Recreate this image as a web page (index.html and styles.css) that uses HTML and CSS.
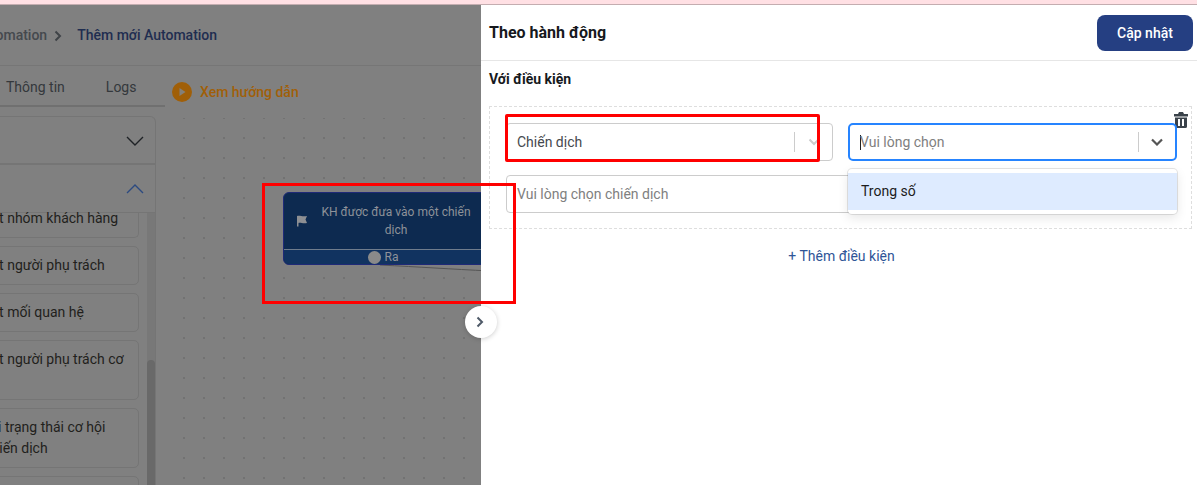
FILE: index.html
```html
<!DOCTYPE html>
<html lang="en">
<head>
    <meta charset="UTF-8">
    <meta name="viewport" content="width=device-width, initial-scale=1.0">
    <title>Thêm mới Automation</title>
    <link rel="icon" href="data:,">
    <link rel="stylesheet" href="styles.css">
</head>
<body>
    <div class="top-strip"></div>
    <div class="screen">
        <div class="left-pane">
            <div class="breadcrumb">
                <span class="crumb">Automation</span>
                <svg class="crumb-sep" width="8" height="12" viewBox="0 0 8 12"><path d="M1.500 1.500 6 6l-4.500 4.500" fill="none" stroke="#3f4347" stroke-width="2"/></svg>
                <span class="crumb-current">Thêm mới Automation</span>
            </div>
            <div class="work">
                <div class="sidebar">
                    <div class="tabs">
                        <span class="tab tab-info">Thông tin</span>
                        <span class="tab tab-logs">Logs</span>
                    </div>
                    <div class="accordion">
                        <div class="acc-head acc-first">
                            <svg width="18" height="10" viewBox="0 0 18 10"><path d="M1 1l8 8 8-8" fill="none" stroke="#1f2226" stroke-width="1.4"/></svg>
                        </div>
                        <div class="acc-head acc-second">
                            <svg width="18" height="10" viewBox="0 0 18 10"><path d="M1 9l8-8 8 8" fill="none" stroke="#2c4a80" stroke-width="1.4"/></svg>
                        </div>
                        <div class="acc-body">
                            <div class="items">
                                <div class="item item-cut">Cập nhật nhóm khách hàng</div>
                                <div class="item">Cập nhật người phụ trách</div>
                                <div class="item">Cập nhật mối quan hệ</div>
                                <div class="item">Cập nhật người phụ trách cơ hội</div>
                                <div class="item">Thay đổi trạng thái cơ hội trong chiến dịch</div>
                                <div class="item">Cập nhật</div>
                            </div>
                            <div class="scroll-track"><div class="scroll-thumb"></div></div>
                        </div>
                    </div>
                </div>
                <div class="canvas">
                    <div class="guide">
                        <svg width="20" height="20" viewBox="0 0 20 20"><circle cx="10" cy="10" r="10" fill="#a05f08"/><path d="M7.500 6v8l6-4z" fill="#84807a"/></svg>
                        <span>Xem hướng dẫn</span>
                    </div>
                    <svg class="edge" width="110" height="12" viewBox="0 0 110 12"><path d="M0 1C40 3 70 5 110 7" fill="none" stroke="#555" stroke-width="1"/></svg>
                    <div class="node">
                        <div class="node-main">
                            <svg class="node-flag" width="12" height="12" viewBox="0 0 12 12"><path d="M1 1c3-1 5 1 10 0L9.500 4.500 11 8C7 9 4 7 2.500 8L2.500 11.500H1z" fill="#8d8f93"/></svg>
                            <div class="node-title">KH được đưa vào một chiến dịch</div>
                        </div>
                        <div class="node-foot"><i class="port"></i>Ra</div>
                    </div>
                </div>
            </div>
        </div>
        <div class="panel">
            <div class="panel-head">
                <h2>Theo hành động</h2>
                <button class="btn-save">Cập nhật</button>
            </div>
            <div class="panel-body">
                <div class="cond-label">Với điều kiện</div>
                <div class="cond-box">
                    <svg class="trash" width="14" height="16" viewBox="0 0 14 16"><path d="M5 0h4l1 2h4v2.500H0V2h4zM1 5.500h12V14.500a1.500 1.500 0 0 1-1.500 1.500h-9A1.500 1.500 0 0 1 1 14.500zM4 7v7h2V7zM8 7v7h2V7z" fill-rule="evenodd" fill="#3a424a"/></svg>
                    <div class="cond-grid">
                        <div class="select">
                            <span class="select-value">Chiến dịch</span>
                            <span class="select-sep"></span>
                            <svg class="select-arrow" width="12" height="8" viewBox="0 0 12 8"><path d="M1.500 1.500 6 6l4.500-4.500" fill="none" stroke="#ccc" stroke-width="2"/></svg>
                        </div>
                        <div class="select-wrap">
                            <div class="select select-focus">
                                <i class="caret"></i>
                                <span class="placeholder">Vui lòng chọn</span>
                                <span class="select-sep"></span>
                                <svg class="select-arrow" width="12" height="8" viewBox="0 0 12 8"><path d="M1 1.500 6 6.500l5-5" fill="none" stroke="#555" stroke-width="2.200"/></svg>
                            </div>
                            <div class="menu"><div class="option">Trong số</div></div>
                        </div>
                        <div class="text-input"><span class="placeholder">Vui lòng chọn chiến dịch</span></div>
                    </div>
                </div>
                <a class="add-cond">+ Thêm điều kiện</a>
            </div>
        </div>
        <button class="drawer-toggle">
            <svg width="8" height="12" viewBox="0 0 8 12"><path d="M1.500 1.500 6 6l-4.500 4.500" fill="none" stroke="#4f5a68" stroke-width="2"/></svg>
        </button>
        <div class="mark mark-node"></div>
        <div class="mark mark-select"></div>
    </div>
</body>
</html>
```

FILE: styles.css
```css
* {
    box-sizing: border-box;
}
body {
    margin: 0;
    height: 485px;
    overflow: hidden;
    font-family: Roboto, "Noto Sans", sans-serif;
    font-size: 14px;
    line-height: 21px;
    color: #212529;
    background: #fff;
}
.top-strip {
    height: 5px;
    background: #ffe0e4;
    border-bottom: 1px solid #c4adb0;
}
.screen {
    position: relative;
    display: flex;
    height: 480px;
    overflow: hidden;
}

/* dimmed page behind the drawer */
.left-pane {
    width: 481px;
    flex: none;
    background: #808080;
    overflow: hidden;
    display: flex;
    flex-direction: column;
}
.breadcrumb {
    height: 61px;
    flex: none;
    display: flex;
    align-items: center;
    margin-left: -26px;
    padding-top: 1px;
    border-bottom: 1px solid #767676;
    font-weight: 500;
}
.crumb {
    color: #45494e;
}
.crumb-sep {
    margin: 0 15px 0 7px;
}
.crumb-current {
    color: #1f2d50;
}
.work {
    flex: 1;
    display: flex;
    min-height: 0;
}
.sidebar {
    width: 165px;
    flex: none;
    overflow: hidden;
}
.tabs {
    height: 41px;
    padding-top: 3px;
    display: flex;
    align-items: center;
    border-bottom: 2px solid #707070;
    color: #34383c;
}
.tab-info {
    margin-left: 6px;
}
.tab-logs {
    margin-left: 41px;
}
.accordion {
    margin-top: 9px;
    width: 156px;
    height: 400px;
    border: 1px solid #757575;
    border-left: none;
    border-radius: 0 6px 0 0;
}
.acc-head {
    height: 48px;
    display: flex;
    align-items: center;
    justify-content: flex-end;
    padding-right: 11px;
    border-bottom: 2px solid #757575;
}
.acc-first {
    padding-top: 2px;
}
.acc-second {
    border-bottom-width: 1px;
}
.acc-body {
    display: flex;
}
.items {
    width: 212px;
    margin-left: -65px;
    flex: none;
    padding-right: 8px;
    display: flex;
    flex-direction: column;
    gap: 8px;
}
.item {
    padding: 8px 12px;
    border: 1px solid #757575;
    border-radius: 5px;
    color: #221f1c;
}
.item-cut {
    height: 25px;
    padding-top: 0;
    border-top: none;
    border-radius: 0 0 5px 5px;
    line-height: 10px;
}
.scroll-track {
    width: 8px;
    height: 272px;
    background: #787878;
}
.scroll-thumb {
    width: 8px;
    height: 130px;
    margin-top: 147px;
    border-radius: 4px 4px 0 0;
    background: #696969;
}
.canvas {
    position: relative;
    flex: 1;
    background-color: #808080;
    background-image: radial-gradient(circle at 1px 1px, #727272 1px, transparent 1.2px);
    background-size: 20px 20px;
    background-position: -2px -9px;
}
.guide {
    display: flex;
    align-items: center;
    gap: 8px;
    height: 52px;
    margin-left: 7px;
    color: #a05f08;
    font-weight: 500;
    background: #808080;
}
.edge {
    position: absolute;
    left: 215px;
    top: 198px;
}
/* node sits on the free canvas */
.node {
    position: absolute;
    left: 118px;
    top: 126px;
    width: 210px;
    height: 73px;
    border: 1px solid #1f2a78;
    border-radius: 6px;
    overflow: hidden;
    background: #0d2a50;
    color: #8e9299;
    font-size: 12px;
    line-height: 18px;
}
.node-main {
    height: 57px;
    display: flex;
    align-items: center;
    border-bottom: 1px solid #6f7c8c;
}
.node-flag {
    margin-left: 12px;
    flex: none;
}
.node-title {
    width: 156px;
    margin-left: 10px;
    text-align: center;
}
.node-foot {
    height: 14px;
    display: flex;
    align-items: center;
    justify-content: center;
    gap: 4px;
    padding-right: 10px;
    background: #113360;
}
.port {
    width: 13px;
    height: 13px;
    border-radius: 50%;
    background: #8a8a8a;
}

/* drawer */
.panel {
    flex: 1;
    min-width: 0;
    background: #fff;
}
.panel-head {
    height: 56px;
    display: flex;
    align-items: center;
    justify-content: space-between;
    padding: 0 4px 0 8px;
    border-bottom: 1px solid #e6e6e6;
}
.panel-head h2 {
    margin: 0;
    font-size: 16px;
    font-weight: 700;
    color: #16191d;
}
.btn-save {
    width: 96px;
    height: 36px;
    border: none;
    border-radius: 8px;
    background: #253f82;
    color: #fff;
    font: 500 14px Roboto, sans-serif;
}
.panel-body {
    padding: 8px 5px 0 8px;
}
.cond-label {
    font-weight: 700;
    color: #16191d;
}
.cond-box {
    position: relative;
    margin-top: 16px;
    padding: 16px 14px 15px 16px;
    border: 1px dashed #dedede;
}
.trash {
    position: absolute;
    right: 3px;
    top: 5px;
}
.cond-grid {
    display: grid;
    grid-template-columns: 327px 329px;
    gap: 14px 15px;
}
.select {
    height: 38px;
    display: flex;
    align-items: center;
    padding: 0 12px 0 10px;
    border: 1px solid #ccc;
    border-radius: 4px;
    color: #45494e;
}
.select-value {
    flex: 1;
}
.select-sep {
    width: 1px;
    height: 20px;
    margin-right: 13px;
    background: #ccc;
}
.select-wrap {
    position: relative;
}
.select-focus {
    border: 2px solid #2684ff;
    border-radius: 5px;
    padding-left: 10px;
}
.select-focus .placeholder {
    flex: 1;
}
.select-focus .select-sep {
    margin-right: 12px;
}
.caret {
    width: 1px;
    height: 15px;
    margin-right: -1px;
    background: #222;
}
.placeholder {
    color: #808080;
}
.text-input {
    grid-column: 1 / 3;
    height: 38px;
    display: flex;
    align-items: center;
    padding: 0 10px;
    border: 1px solid #ccc;
    border-radius: 4px;
}
.menu {
    position: absolute;
    z-index: 2;
    left: 0;
    right: 0;
    top: 46px;
    padding: 4px 0;
    background: #fff;
    border-radius: 4px;
    box-shadow: 0 0 0 1px rgba(0, 0, 0, .1), 0 4px 11px rgba(0, 0, 0, .1);
}
.option {
    height: 37px;
    padding: 0 13px;
    display: flex;
    align-items: center;
    background: #deebff;
    color: #1c1c1c;
}
.add-cond {
    display: block;
    margin-top: 17px;
    padding-left: 2px;
    text-align: center;
    color: #2f5597;
}
.drawer-toggle {
    position: absolute;
    z-index: 3;
    left: 465px;
    top: 301px;
    width: 32px;
    height: 32px;
    padding: 0 2px 0 0;
    border: none;
    border-radius: 50%;
    background: #fff;
    box-shadow: 0 1px 5px rgba(0, 0, 0, .2);
    display: flex;
    align-items: center;
    justify-content: center;
}

/* red annotation boxes drawn on the screenshot */
.mark {
    position: absolute;
    z-index: 4;
    border: 3px solid #ff0000;
}
.mark-node {
    left: 262px;
    top: 178px;
    width: 254px;
    height: 121px;
}
.mark-select {
    left: 505px;
    top: 109px;
    width: 315px;
    height: 48px;
    border-radius: 2px;
}
```
